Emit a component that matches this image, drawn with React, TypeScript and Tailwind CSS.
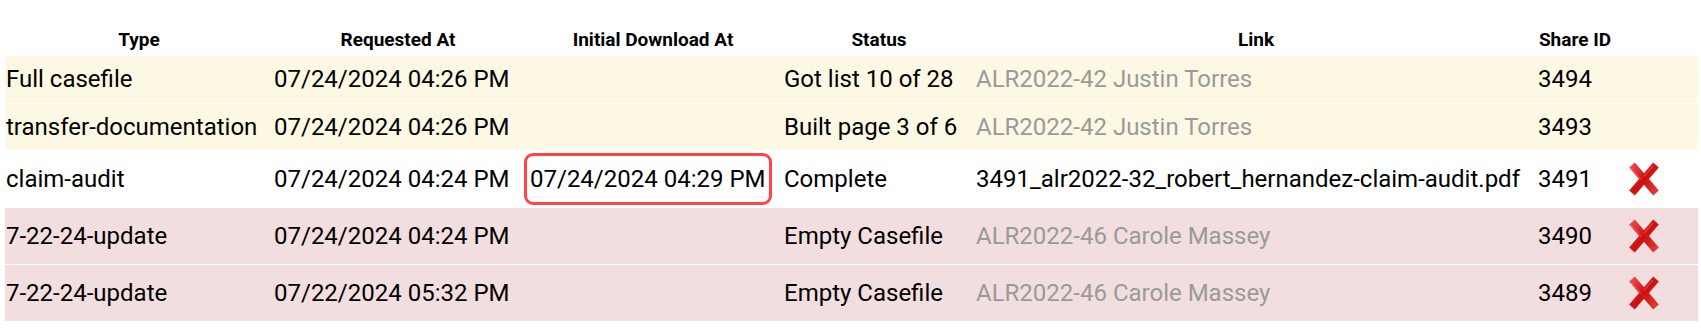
const rows = [
  { type: 'Full casefile', requested: '07/24/2024 04:26 PM', initial: '', status: 'Got list 10 of 28', link: 'ALR2022-42 Justin Torres', ready: false, share: '3494', tone: 'warning', del: false },
  { type: 'transfer-documentation', requested: '07/24/2024 04:26 PM', initial: '', status: 'Built page 3 of 6', link: 'ALR2022-42 Justin Torres', ready: false, share: '3493', tone: 'warning', del: false },
  { type: 'claim-audit', requested: '07/24/2024 04:24 PM', initial: '07/24/2024 04:29 PM', status: 'Complete', link: '3491_alr2022-32_robert_hernandez-claim-audit.pdf', ready: true, share: '3491', tone: 'plain', del: true },
  { type: '7-22-24-update', requested: '07/24/2024 04:24 PM', initial: '', status: 'Empty Casefile', link: 'ALR2022-46 Carole Massey', ready: false, share: '3490', tone: 'danger', del: true },
  { type: '7-22-24-update', requested: '07/22/2024 05:32 PM', initial: '', status: 'Empty Casefile', link: 'ALR2022-46 Carole Massey', ready: false, share: '3489', tone: 'danger', del: true },
];

const headers = ['Type', 'Requested At', 'Initial Download At', 'Status', 'Link', 'Share ID', ''];

// rode kruisje, zoals het oude delete-icoontje
const DeleteIcon = ({ id }: { id: string }) => (
  <svg width="32" height="34" viewBox="0 0 32 34">
    <defs>
      <linearGradient id={`xg-${id}`} x1="0" y1="0" x2="1" y2="1">
        <stop offset="0" stopColor="#ee4a4a" />
        <stop offset="0.5" stopColor="#cc1010" />
        <stop offset="1" stopColor="#e03a3a" />
      </linearGradient>
    </defs>
    <g stroke={`url(#xg-${id})`} strokeWidth="7.5" strokeLinecap="butt">
      <line x1="4" y1="3" x2="28" y2="31" />
      <line x1="28" y1="3" x2="4" y2="31" />
    </g>
    <g stroke="#ff8a8a" strokeWidth="1" strokeOpacity="0.55">
      <line x1="3" y1="6" x2="13" y2="17.5" />
      <line x1="25" y1="4" x2="16" y2="14.5" />
    </g>
  </svg>
);

export default function App() {
  return (
    <div className="w-[1701px] h-[330px] bg-white px-[5px] font-['Roboto','Liberation_Sans',sans-serif] text-black">
      <table className="w-[1693px] table-fixed border-collapse">
        <colgroup>
          <col className="w-[268px]" />
          <col className="w-[250px]" />
          <col className="w-[260px]" />
          <col className="w-[192px]" />
          <col className="w-[562px]" />
          <col className="w-[76px]" />
          <col className="w-[85px]" />
        </colgroup>
        <thead>
          <tr className="h-[56px]">
            {headers.map((h, i) => (
              <th key={i} className="align-bottom pb-[3px] px-[1px] text-center text-[19px] font-bold leading-[27px] whitespace-nowrap">
                {h}
              </th>
            ))}
          </tr>
        </thead>
        <tbody>
          {rows.map((r) => (
            <tr
              key={r.share}
              className={`border-b border-white text-[24px] leading-[28px] ${r.del ? 'h-[57px]' : 'h-[47px]'} ${
                r.tone === 'warning' ? 'bg-[#fcf8e3]' : r.tone === 'danger' ? 'bg-[#f2dede]' : 'bg-white'
              }`}
            >
              <td className="px-[1px] align-middle whitespace-nowrap">{r.type}</td>
              <td className="px-[1px] align-middle whitespace-nowrap">{r.requested}</td>
              <td className="px-[1px] align-middle whitespace-nowrap">
                {r.initial && (
                  <div className="flex h-[52px] w-[248px] items-center rounded-[9px] border-[3px] border-[#ff4545] px-[3px]">
                    {r.initial}
                  </div>
                )}
              </td>
              <td className="px-[1px] align-middle whitespace-nowrap">{r.status}</td>
              <td className={`px-[1px] align-middle whitespace-nowrap ${r.ready ? 'text-black' : 'text-[#9a9a9a]'}`}>{r.link}</td>
              <td className="px-[1px] align-middle whitespace-nowrap">{r.share}</td>
              <td className="pl-[15px] align-middle">
                {r.del && (
                  <div className="flex items-center">
                    <DeleteIcon id={r.share} />
                  </div>
                )}
              </td>
            </tr>
          ))}
        </tbody>
      </table>
    </div>
  );
}
